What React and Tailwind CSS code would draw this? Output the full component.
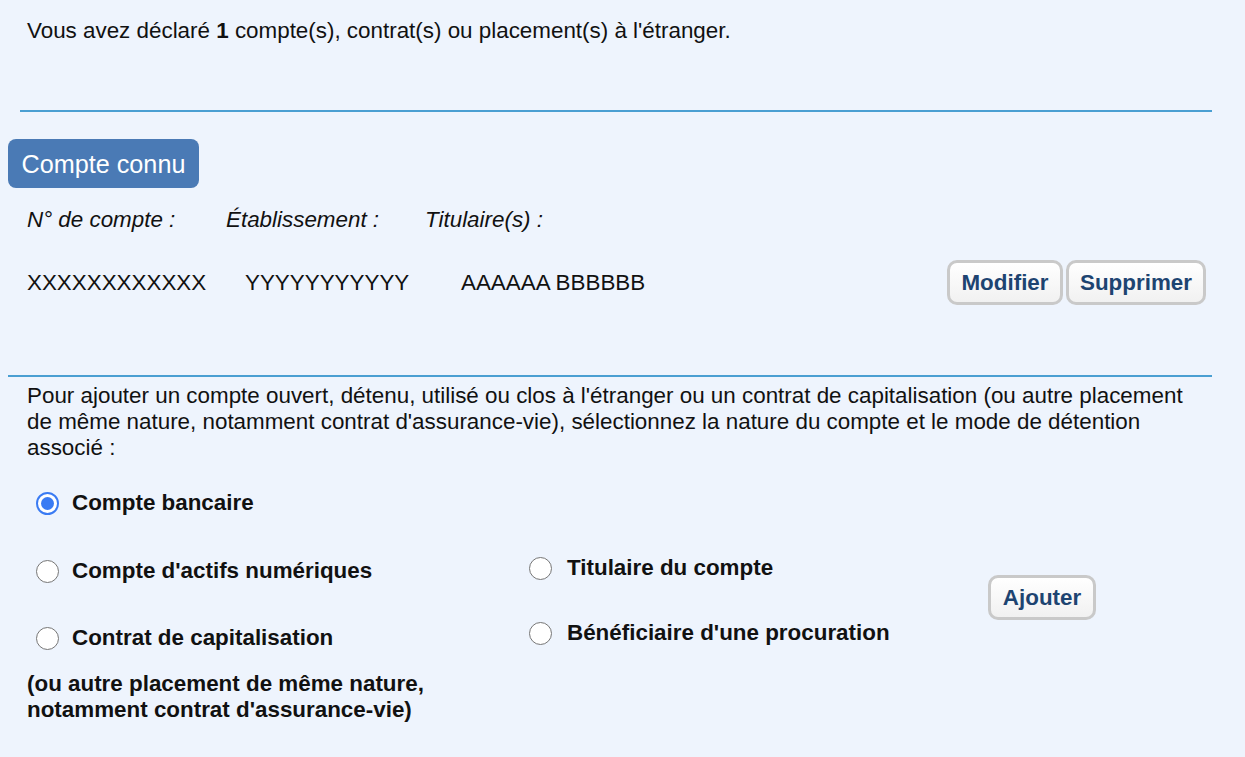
import React from "react"

const Radio = ({ checked }) => (
  <span
    className={
      checked
        ? "flex items-center justify-center w-[23px] h-[23px] shrink-0 rounded-full border-[2px] border-[#3a7bf3] bg-white"
        : "flex w-[23px] h-[23px] shrink-0 rounded-full border-[1.5px] border-[#767676] bg-white"
    }
  >
    {checked && <span className="block w-[13px] h-[13px] rounded-full bg-[#3a7bf3]" />}
  </span>
)

const GreyButton = ({ children, width }) => (
  <button
    className={`${width} h-[45px] flex items-center justify-center rounded-[10px] border-[3px] border-[#c9c9c9] bg-gradient-to-b from-white to-[#f1f1f1] text-[#1d4471] font-bold text-[22.4px] leading-[26px]`}
  >
    {children}
  </button>
)

const RadioRow = ({ checked, label, indent }) => (
  <label className={`flex items-center gap-[13px] ${indent}`}>
    <Radio checked={checked} />
    <span className="font-bold">{label}</span>
  </label>
)

export default function App() {
  return (
    <div className="w-[1245px] h-[757px] overflow-hidden bg-[#eef4fd] text-[#111] font-['Liberation_Sans',Arial,sans-serif] text-[22.4px] leading-[26px]">
      <p className="pl-[27px] pt-[18px]">
        Vous avez déclaré <b>1</b> compte(s), contrat(s) ou placement(s) à l'étranger.
      </p>

      <div className="ml-[20px] mt-[66px] w-[1192px] h-[2px] bg-[#4a9fd2]" />

      <div className="ml-[8px] mt-[27px] w-[191px] h-[49px] flex items-center justify-center rounded-[8px] bg-[#4a7ab5] text-white text-[25.2px]">
        Compte connu
      </div>

      <div className="flex pl-[27px] mt-[19px] italic">
        <span className="w-[199px]">N° de compte :</span>
        <span className="w-[199px]">Établissement :</span>
        <span>Titulaire(s) :</span>
      </div>

      <div className="flex items-center pl-[27px] pr-[39px] mt-[27px]">
        <span className="w-[218px]">XXXXXXXXXXXX</span>
        <span className="w-[216px]">YYYYYYYYYYY</span>
        <span>AAAAAA BBBBBB</span>
        <div className="ml-auto flex gap-[3px]">
          <GreyButton width="w-[116px]">Modifier</GreyButton>
          <GreyButton width="w-[140px]">Supprimer</GreyButton>
        </div>
      </div>

      <div className="ml-[8px] mt-[70px] w-[1204px] h-[2px] bg-[#4a9fd2]" />

      <p className="pl-[27px] mt-[6px] w-[1195px]">
        Pour ajouter un compte ouvert, détenu, utilisé ou clos à l'étranger ou un contrat de capitalisation (ou autre placement de même nature, notamment contrat d'assurance-vie), sélectionnez la nature du compte et le mode de détention associé :
      </p>

      <div className="pl-[27px] mt-[29px]">
        <RadioRow checked label="Compte bancaire" indent="ml-[9px]" />
      </div>

      <div className="flex items-start pl-[27px] mt-[39px]">
        <div className="w-[502px] pt-[3px] flex flex-col">
          <RadioRow label="Compte d'actifs numériques" indent="ml-[9px]" />
          <div className="mt-[41px]">
            <RadioRow label="Contrat de capitalisation" indent="ml-[9px]" />
          </div>
          <p className="mt-[20px] font-bold">
            (ou autre placement de même nature,
            <br />
            notamment contrat d'assurance-vie)
          </p>
        </div>
        <div className="w-[459px] flex flex-col">
          <RadioRow label="Titulaire du compte" indent="gap-[15px]" />
          <div className="mt-[39px]">
            <RadioRow label="Bénéficiaire d'une procuration" indent="gap-[15px]" />
          </div>
        </div>
        <div className="mt-[20px]">
          <GreyButton width="w-[108px]">Ajouter</GreyButton>
        </div>
      </div>
    </div>
  )
}
